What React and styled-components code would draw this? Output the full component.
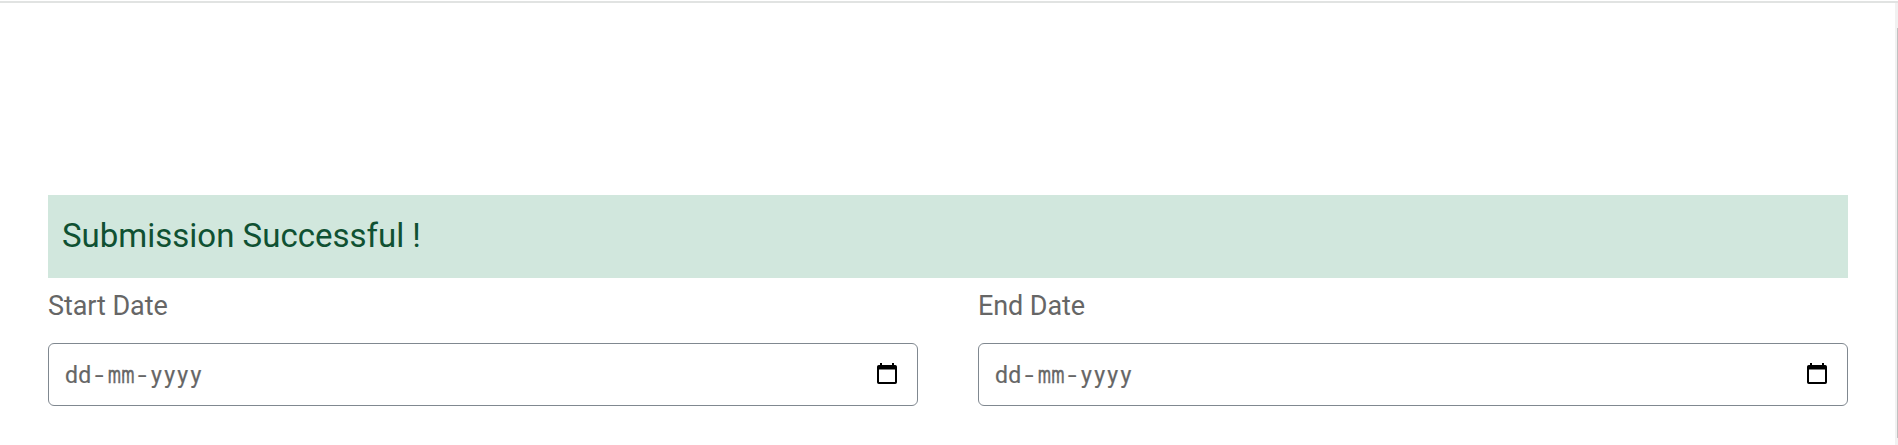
import React from "react";
import styled, { createGlobalStyle } from "styled-components";

const GlobalStyle = createGlobalStyle`
  * { box-sizing: border-box; }
  html, body { margin: 0; background: #fff; overflow: hidden; }
  body { font-family: Roboto, "Liberation Sans", sans-serif; }
`;

const Page = styled.div`
  display: flex;
  flex-direction: column;
  height: 445px;
  padding-top: 1px;
`;

const TopRule = styled.div`
  flex: none;
  height: 2px;
  background: #e1e3e2;
`;

const Body = styled.div`
  flex: 1;
  display: flex;
  min-height: 0;
`;

const Content = styled.main`
  flex: 1;
  padding: 192px 47px 0 48px;
`;

const ScrollTrack = styled.div`
  width: 3px;
  padding: 25px 0 7px 2px;
  background: #f1f1f1;
`;

const ScrollThumb = styled.div`
  height: 100%;
  background: #c1c1c1;
`;

const Alert = styled.div`
  height: 83px;
  padding-left: 14px;
  background: #d1e7dd;
  color: #0f5132;
  font-size: 33px;
  line-height: 82px;
`;

const Fields = styled.div`
  display: grid;
  grid-template-columns: 1fr 1fr;
  column-gap: 60px;
`;

const Label = styled.div`
  height: 65px;
  color: #666;
  font-size: 27px;
  letter-spacing: -0.08px;
  line-height: 56px;
`;

const DateBox = styled.div`
  display: flex;
  align-items: center;
  justify-content: space-between;
  height: 63px;
  padding: 0 20px 0 16px;
  border: 1px solid #808890;
  border-radius: 6px;
`;

const Mask = styled.div`
  display: flex;
  padding-top: 2px;
  color: #666;
  font-size: 23px;
  line-height: 30px;
`;

const Part = styled.span`
  width: ${(p) => p.$width}px;
  letter-spacing: ${(p) => p.$spacing || 0}px;
  transform: scaleX(${(p) => p.$scale || 1});
  transform-origin: left;
  white-space: nowrap;
  -webkit-text-stroke: ${(p) => p.$stroke || 0}px #666;
`;

const Dash = styled.span`
  width: 16px;
  padding-right: 1px;
  text-align: center;
  transform: scaleX(1.4);
`;

const CalendarIcon = styled(({ className }) => (
  <svg className={className} width="20" height="21" viewBox="0 0 20 21" aria-hidden="true">
    <path
      fillRule="evenodd"
      d="M3 0h2v2h10V0h2v2h1.2A1.8 1.8 0 0 1 20 3.8v15.4a1.8 1.8 0 0 1-1.8 1.8H1.8A1.8 1.8 0 0 1 0 19.2V3.8A1.8 1.8 0 0 1 1.8 2H3zM2 6.5v12.5h16V6.5z"
    />
  </svg>
))`
  margin-bottom: 2px;
`;

const DateField = ({ label }) => (
  <div>
    <Label>{label}</Label>
    <DateBox>
      <Mask>
        <Part $width={27} $spacing={0.3} $stroke={0.2}>dd</Part>
        <Dash>-</Dash>
        <Part $width={27} $scale={0.64} $spacing={1} $stroke={0.7}>mm</Part>
        <Dash>-</Dash>
        <Part $width={54} $spacing={2.3} $stroke={0.2}>yyyy</Part>
      </Mask>
      <CalendarIcon />
    </DateBox>
  </div>
);

export default function App() {
  return (
    <>
      <GlobalStyle />
      <Page>
        <TopRule />
        <Body>
          <Content>
            <Alert>Submission Successful !</Alert>
            <Fields>
              <DateField label="Start Date" />
              <DateField label="End Date" />
            </Fields>
          </Content>
          <ScrollTrack>
            <ScrollThumb />
          </ScrollTrack>
        </Body>
      </Page>
    </>
  );
}
